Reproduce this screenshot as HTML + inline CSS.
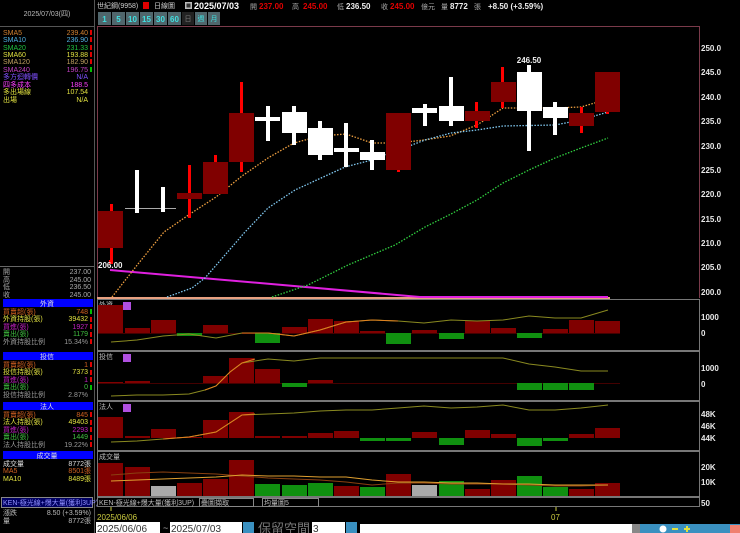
<!DOCTYPE html>
<html><head><meta charset="utf-8"><style>
html,body{margin:0;padding:0;background:#000;width:740px;height:533px;overflow:hidden}
svg{display:block}
text{font-family:"Liberation Sans","Noto Sans CJK TC",sans-serif}
.s{font-size:7px}
.ax{font-size:8px;font-weight:bold;fill:#e8e8e8}
</style></head><body>
<svg width="740" height="533" viewBox="0 0 740 533" xmlns="http://www.w3.org/2000/svg">
<rect width="740" height="533" fill="#000"/>
<line x1="94.5" y1="0" x2="94.5" y2="533" stroke="#555" stroke-width="1"/>
<line x1="0" y1="26.5" x2="94" y2="26.5" stroke="#555"/>
<text x="47" y="16" class="s" fill="#bbb" text-anchor="middle">2025/07/03(四)</text>
<g class="s">
<text x="3" y="35" fill="#d08030">SMA5</text><text x="88" y="35" fill="#d08030" text-anchor="end">239.40</text>
<text x="3" y="42" fill="#50b0e0">SMA10</text><text x="88" y="42" fill="#50b0e0" text-anchor="end">236.90</text>
<text x="3" y="50" fill="#20c040">SMA20</text><text x="88" y="50" fill="#20c040" text-anchor="end">231.33</text>
<text x="3" y="57" fill="#e0e040">SMA60</text><text x="88" y="57" fill="#e0e040" text-anchor="end">193.88</text>
<text x="3" y="64" fill="#c0a060">SMA120</text><text x="88" y="64" fill="#c0a060" text-anchor="end">182.90</text>
<text x="3" y="72" fill="#c040c0">SMA240</text><text x="88" y="72" fill="#c040c0" text-anchor="end">196.75</text>
<text x="3" y="79" fill="#8050ff">多方迴轉價</text><text x="88" y="79" fill="#8050ff" text-anchor="end">N/A</text>
<text x="3" y="87" fill="#ff40ff">四多成本</text><text x="88" y="87" fill="#ff40ff" text-anchor="end">188.5</text>
<text x="3" y="94" fill="#e0e040">多出場線</text><text x="88" y="94" fill="#e0e040" text-anchor="end">107.54</text>
<text x="3" y="102" fill="#e0e040">出場</text><text x="88" y="102" fill="#e0e040" text-anchor="end">N/A</text>
</g>
<g fill="#e00000"><rect x="90" y="30" width="2" height="5"/><rect x="90" y="37" width="2" height="5"/><rect x="90" y="45" width="2" height="5"/><rect x="90" y="52" width="2" height="5"/><rect x="90" y="59" width="2" height="5"/></g>
<rect x="90" y="67" width="2" height="5" fill="#00c000"/>
<line x1="0" y1="266.5" x2="94" y2="266.5" stroke="#666"/>
<g class="s" fill="#aaa">
<text x="3" y="274">開</text><text x="91" y="274" text-anchor="end">237.00</text>
<text x="3" y="282">高</text><text x="91" y="282" text-anchor="end">245.00</text>
<text x="3" y="289">低</text><text x="91" y="289" text-anchor="end">236.50</text>
<text x="3" y="297">收</text><text x="91" y="297" text-anchor="end">245.00</text>
</g>
<rect x="3" y="299" width="90" height="8" fill="#0000ff"/>
<text x="47" y="306" class="s" fill="#ddd" text-anchor="middle">外資</text>
<g class="s">
<text x="3" y="314" fill="#d06020">買賣超(張)</text><text x="88" y="314" fill="#d06020" text-anchor="end">748</text>
<text x="3" y="321" fill="#e0e040">外資持股(張)</text><text x="88" y="321" fill="#e0e040" text-anchor="end">39432</text>
<text x="3" y="329" fill="#c020c0">買進(張)</text><text x="88" y="329" fill="#c020c0" text-anchor="end">1927</text>
<text x="3" y="336" fill="#40c040">賣出(張)</text><text x="88" y="336" fill="#40c040" text-anchor="end">1179</text>
<text x="3" y="344" fill="#999">外資持股比例</text><text x="88" y="344" fill="#999" text-anchor="end">15.34%</text>
</g>
<rect x="3" y="352" width="90" height="8" fill="#0000ff"/>
<text x="47" y="359" class="s" fill="#ddd" text-anchor="middle">投信</text>
<g class="s">
<text x="3" y="367" fill="#d06020">買賣超(張)</text><text x="88" y="367" fill="#d06020" text-anchor="end">1</text>
<text x="3" y="374" fill="#e0e040">投信持股(張)</text><text x="88" y="374" fill="#e0e040" text-anchor="end">7373</text>
<text x="3" y="382" fill="#c020c0">買進(張)</text><text x="88" y="382" fill="#c020c0" text-anchor="end">1</text>
<text x="3" y="389" fill="#40c040">賣出(張)</text><text x="88" y="389" fill="#40c040" text-anchor="end">0</text>
<text x="3" y="397" fill="#999">投信持股比例</text><text x="88" y="397" fill="#999" text-anchor="end">2.87%</text>
</g>
<rect x="3" y="402" width="90" height="8" fill="#0000ff"/>
<text x="47" y="409" class="s" fill="#ddd" text-anchor="middle">法人</text>
<g class="s">
<text x="3" y="417" fill="#d06020">買賣超(張)</text><text x="88" y="417" fill="#d06020" text-anchor="end">845</text>
<text x="3" y="424" fill="#e0e040">法人持股(張)</text><text x="88" y="424" fill="#e0e040" text-anchor="end">49403</text>
<text x="3" y="432" fill="#c020c0">買進(張)</text><text x="88" y="432" fill="#c020c0" text-anchor="end">2293</text>
<text x="3" y="439" fill="#40c040">賣出(張)</text><text x="88" y="439" fill="#40c040" text-anchor="end">1449</text>
<text x="3" y="447" fill="#999">法人持股比例</text><text x="88" y="447" fill="#999" text-anchor="end">19.22%</text>
</g>
<rect x="3" y="451" width="90" height="8" fill="#0000ff"/>
<text x="47" y="458" class="s" fill="#ddd" text-anchor="middle">成交量</text>
<g class="s">
<text x="3" y="466" fill="#ddd">成交量</text><text x="91" y="466" fill="#ddd" text-anchor="end">8772張</text>
<text x="3" y="473" fill="#d06020">MA5</text><text x="91" y="473" fill="#d06020" text-anchor="end">8501張</text>
<text x="3" y="481" fill="#e0e040">MA10</text><text x="91" y="481" fill="#e0e040" text-anchor="end">8489張</text>
</g>
<g fill="#e00000"><rect x="90" y="309" width="2" height="5"/><rect x="90" y="317" width="2" height="5"/><rect x="90" y="324" width="2" height="5"/><rect x="90" y="332" width="2" height="5"/><rect x="90" y="339" width="2" height="5"/>
<rect x="90" y="362" width="2" height="5"/><rect x="90" y="370" width="2" height="5"/><rect x="90" y="377" width="2" height="5"/>
<rect x="90" y="412" width="2" height="5"/><rect x="90" y="420" width="2" height="5"/><rect x="90" y="427" width="2" height="5"/><rect x="90" y="435" width="2" height="5"/><rect x="90" y="442" width="2" height="5"/></g>
<rect x="90" y="309" width="2" height="5" fill="#00c000"/><rect x="90" y="385" width="2" height="5" fill="#00c000"/>
<rect x="1.5" y="497.5" width="91" height="10" fill="#000060" stroke="#888"/>
<text x="3" y="505" class="s" fill="#9090ff">KEN-極光線+爆大量(獲利3UP)</text>
<g class="s" fill="#bbb">
<text x="3" y="515">漲跌</text><text x="91" y="515" text-anchor="end">8.50 (+3.59%)</text>
<text x="3" y="523">量</text><text x="91" y="523" text-anchor="end">8772張</text>
</g>

<text x="97" y="8" class="s" fill="#ccc">世紀鋼(9958)</text>
<rect x="143" y="2" width="6" height="7" fill="#e00000"/>
<text x="154" y="8" class="s" fill="#ccc">日線圖</text>
<rect x="185" y="2" width="7" height="7" fill="#bbb"/><rect x="186.5" y="3.5" width="4" height="4" fill="#333"/>
<text x="194" y="9" font-size="9" font-weight="bold" fill="#fff">2025/07/03</text>
<g font-size="8" font-weight="bold">
<text x="250" y="9" class="s" fill="#aaa" font-weight="normal">開</text><text x="259" y="9" fill="#e00000">237.00</text>
<text x="292" y="9" class="s" fill="#aaa" font-weight="normal">高</text><text x="303" y="9" fill="#e00000">245.00</text>
<text x="337" y="9" class="s" fill="#aaa" font-weight="normal">低</text><text x="346" y="9" fill="#eee">236.50</text>
<text x="381" y="9" class="s" fill="#aaa" font-weight="normal">收</text><text x="390" y="9" fill="#e00000">245.00</text>
<text x="421" y="9" class="s" fill="#aaa" font-weight="normal">億元</text>
<text x="441" y="9" class="s" fill="#aaa" font-weight="normal">量</text><text x="450" y="9" fill="#eee">8772</text>
<text x="474" y="9" class="s" fill="#aaa" font-weight="normal">張</text>
<text x="488" y="9" fill="#eee">+8.50 (+3.59%)</text>
</g>
<g font-size="8" font-weight="bold" fill="#40e0e0" text-anchor="middle">
<rect x="98" y="12" width="13" height="13" fill="#50666c"/><text x="104.5" y="22">1</text>
<rect x="112" y="12" width="13" height="13" fill="#50666c"/><text x="118.5" y="22">5</text>
<rect x="126" y="12" width="13" height="13" fill="#50666c"/><text x="132.5" y="22">10</text>
<rect x="140" y="12" width="13" height="13" fill="#50666c"/><text x="146.5" y="22">15</text>
<rect x="154" y="12" width="13" height="13" fill="#50666c"/><text x="160.5" y="22">30</text>
<rect x="168" y="12" width="13" height="13" fill="#50666c"/><text x="174.5" y="22">60</text>
<rect x="182" y="12" width="12" height="13" fill="#222"/><text x="188" y="21" class="s" fill="#777" font-weight="normal">日</text>
<rect x="195" y="12" width="12" height="13" fill="#50666c"/><text x="201" y="21" class="s" font-weight="normal">週</text>
<rect x="208" y="12" width="12" height="13" fill="#50666c"/><text x="214" y="21" class="s" font-weight="normal">月</text>
</g>

<g fill="none" stroke="#7a3a4a" stroke-width="1">
<line x1="97" y1="26.5" x2="699.5" y2="26.5"/>
<line x1="699.5" y1="26" x2="699.5" y2="298"/>
<line x1="97.5" y1="26" x2="97.5" y2="298"/>
</g>
<g fill="none" stroke="#777" stroke-width="1">
<rect x="97.5" y="299.5" width="602" height="51"/>
<rect x="97.5" y="351.5" width="602" height="49"/>
<rect x="97.5" y="401.5" width="602" height="49"/>
<rect x="97.5" y="451.5" width="602" height="45"/>
<rect x="97.5" y="497.5" width="602" height="9"/>
</g>
<line x1="97" y1="298" x2="610" y2="298" stroke="#e8a080" stroke-width="2"/>

<g class="ax">
<text x="701" y="51">250.0</text><text x="701" y="75">245.0</text><text x="701" y="100">240.0</text>
<text x="701" y="124">235.0</text><text x="701" y="149">230.0</text><text x="701" y="173">225.0</text>
<text x="701" y="197">220.0</text><text x="701" y="222">215.0</text><text x="701" y="246">210.0</text>
<text x="701" y="270">205.0</text><text x="701" y="295">200.0</text>
<text x="701" y="320">1000</text><text x="701" y="336">0</text>
<text x="701" y="371">1000</text><text x="701" y="387">0</text>
<text x="701" y="417">48K</text><text x="701" y="429">46K</text><text x="701" y="441">44K</text>
<text x="701" y="470">20K</text><text x="701" y="485">10K</text><text x="701" y="506">50</text>
</g>

<polyline points="110,270 420,297 608,297" fill="none" stroke="#e020e0" stroke-width="2"/>
<polyline points="112,297 138,264 164,232 190,214 216,197 242,176 268,158 294,143 320,136 346,134 372,143 398,143 424,140 450,136 477,125 503,108 529,108 555,108 581,107 608,99" fill="none" stroke="#f0a040" stroke-width="1.3" stroke-dasharray="1.5,1.5"/>
<polyline points="167,297 192,288 205,278 245,232 268,208 295,190 345,167 372,160 425,140 451,133 477,130 503,126 555,125 581,120 608,112" fill="none" stroke="#80c8f0" stroke-width="1.3" stroke-dasharray="1.5,1.5"/>
<polyline points="272,297 308,285 348,265 395,245 425,227 451,214 477,200 503,183 529,170 555,158 581,148 608,138" fill="none" stroke="#30d040" stroke-width="1.3" stroke-dasharray="1.5,1.5"/>

<g fill="#ff0000">
<rect x="110" y="204" width="3" height="58"/><rect x="188" y="165" width="3" height="53"/>
<rect x="214" y="155" width="3" height="39"/><rect x="240" y="82" width="3" height="90"/>
<rect x="397" y="113" width="3" height="59"/><rect x="475" y="102" width="3" height="26"/>
<rect x="501" y="67" width="3" height="41"/><rect x="580" y="107" width="3" height="26"/>
<rect x="606" y="72" width="3" height="42"/>
<rect x="109" y="260" width="4" height="4"/>
</g>
<g fill="#800000">
<rect x="98" y="211" width="25" height="37"/><rect x="177" y="193" width="25" height="6"/>
<rect x="203" y="162" width="25" height="32"/><rect x="229" y="113" width="25" height="49"/>
<rect x="386" y="113" width="25" height="57"/><rect x="465" y="111" width="25" height="10"/>
<rect x="491" y="82" width="25" height="20"/><rect x="569" y="113" width="25" height="13"/>
<rect x="595" y="72" width="25" height="40"/>
</g>
<line x1="125" y1="208.5" x2="176" y2="208.5" stroke="#aaa"/>
<g fill="#fff">
<rect x="135" y="170" width="4" height="43"/><rect x="161" y="187" width="4" height="25"/>
<rect x="266" y="106" width="4" height="35"/><rect x="255" y="117" width="25" height="4"/>
<rect x="292" y="106" width="4" height="39"/><rect x="282" y="112" width="25" height="21"/>
<rect x="318" y="121" width="4" height="39"/><rect x="308" y="128" width="25" height="27"/>
<rect x="344" y="123" width="4" height="44"/><rect x="334" y="148" width="25" height="4"/>
<rect x="370" y="140" width="4" height="30"/><rect x="360" y="152" width="25" height="8"/>
<rect x="423" y="104" width="4" height="22"/><rect x="412" y="108" width="25" height="5"/>
<rect x="449" y="77" width="4" height="49"/><rect x="439" y="106" width="25" height="15"/>
<rect x="527" y="65" width="4" height="86"/><rect x="517" y="72" width="25" height="39"/>
<rect x="553" y="102" width="4" height="33"/><rect x="543" y="107" width="25" height="11"/>
</g>
<text x="529" y="63" font-size="8" font-weight="bold" fill="#eee" text-anchor="middle">246.50</text>
<text x="98" y="268" font-size="8" font-weight="bold" fill="#eee">206.00</text>

<text x="99" y="307" class="s" fill="#bbb">外資</text>
<rect x="123" y="302" width="8" height="8" fill="#b050e0"/>
<line x1="98" y1="333.5" x2="620" y2="333.5" stroke="#400" />
<g fill="#800000">
<rect x="98" y="305" width="25" height="28"/><rect x="125" y="328" width="25" height="5"/>
<rect x="151" y="320" width="25" height="13"/><rect x="203" y="325" width="25" height="8"/>
<rect x="282" y="327" width="25" height="6"/><rect x="308" y="319" width="25" height="14"/>
<rect x="334" y="321" width="25" height="12"/><rect x="360" y="331" width="25" height="2"/>
<rect x="412" y="330" width="25" height="3"/><rect x="465" y="321" width="25" height="12"/>
<rect x="491" y="328" width="25" height="5"/><rect x="543" y="329" width="25" height="4"/>
<rect x="569" y="320" width="25" height="13"/><rect x="595" y="321" width="25" height="12"/>
</g>
<g fill="#109010">
<rect x="177" y="333" width="25" height="3"/><rect x="255" y="333" width="25" height="10"/>
<rect x="386" y="333" width="25" height="11"/><rect x="439" y="333" width="25" height="6"/>
<rect x="517" y="333" width="25" height="5"/>
</g>
<polyline points="111,342 137,340 163,336 189,334 216,338 242,333 268,333 294,336 320,330 346,322 372,320 398,321 424,323 451,320 477,321 503,320 529,316 555,318 581,318 608,310" fill="none" stroke="#8a8a20" stroke-width="1"/>
<polyline points="242,333 268,333 294,336 320,330 346,322 372,320 398,321" fill="none" stroke="#e08020" stroke-width="1"/>

<text x="99" y="359" class="s" fill="#bbb">投信</text>
<rect x="123" y="354" width="8" height="8" fill="#b050e0"/>
<line x1="98" y1="383.5" x2="620" y2="383.5" stroke="#400"/>
<g fill="#800000">
<rect x="98" y="382" width="25" height="1"/><rect x="125" y="381" width="25" height="2"/>
<rect x="203" y="376" width="25" height="7"/><rect x="229" y="358" width="25" height="25"/>
<rect x="255" y="369" width="25" height="14"/><rect x="308" y="380" width="25" height="3"/>
</g>
<g fill="#109010">
<rect x="282" y="383" width="25" height="4"/><rect x="517" y="383" width="25" height="7"/>
<rect x="543" y="383" width="25" height="7"/><rect x="569" y="383" width="25" height="7"/>
</g>
<polyline points="111,396 137,395 163,395 189,394 205,390 216,386 230,372 242,363 268,359 294,361 320,358 346,358 372,358 398,358 424,358 451,358 477,358 503,358 529,364 555,367 581,371 608,371" fill="none" stroke="#8a8a20" stroke-width="1"/>
<polyline points="205,390 216,386 230,372 242,363 255,359" fill="none" stroke="#e08020" stroke-width="1"/>

<text x="99" y="409" class="s" fill="#bbb">法人</text>
<rect x="123" y="404" width="8" height="8" fill="#b050e0"/>
<g fill="#800000">
<rect x="98" y="417" width="25" height="21"/><rect x="125" y="436" width="25" height="2"/>
<rect x="151" y="429" width="25" height="9"/><rect x="177" y="437" width="25" height="1"/>
<rect x="203" y="420" width="25" height="18"/><rect x="229" y="412" width="25" height="26"/>
<rect x="255" y="436" width="25" height="2"/><rect x="282" y="436" width="25" height="2"/>
<rect x="308" y="433" width="25" height="5"/><rect x="334" y="431" width="25" height="7"/>
<rect x="412" y="432" width="25" height="6"/><rect x="465" y="430" width="25" height="8"/>
<rect x="491" y="434" width="25" height="4"/><rect x="569" y="434" width="25" height="4"/>
<rect x="595" y="428" width="25" height="10"/>
</g>
<g fill="#109010">
<rect x="360" y="438" width="25" height="3"/><rect x="386" y="438" width="25" height="3"/>
<rect x="439" y="438" width="25" height="7"/><rect x="517" y="438" width="25" height="8"/>
<rect x="543" y="438" width="25" height="3"/>
</g>
<polyline points="111,442 137,441 163,439 189,437 216,432 242,415 268,414 294,413 320,411 346,410 372,410 398,408 424,406 451,408 477,407 503,405 529,410 555,410 581,408 608,405" fill="none" stroke="#8a8a20" stroke-width="1"/>
<polyline points="163,439 189,437 216,432 242,415 255,414" fill="none" stroke="#e08020" stroke-width="1"/>

<text x="99" y="459" class="s" fill="#bbb">成交量</text>
<g fill="#800000">
<rect x="98" y="463" width="25" height="33"/><rect x="125" y="467" width="25" height="29"/>
<rect x="177" y="483" width="25" height="13"/><rect x="203" y="479" width="25" height="17"/>
<rect x="229" y="460" width="25" height="36"/><rect x="334" y="486" width="25" height="10"/>
<rect x="386" y="474" width="25" height="22"/><rect x="465" y="489" width="25" height="7"/>
<rect x="491" y="480" width="25" height="16"/><rect x="569" y="489" width="25" height="7"/>
<rect x="595" y="483" width="25" height="13"/>
</g>
<g fill="#109010">
<rect x="255" y="484" width="25" height="12"/><rect x="282" y="485" width="25" height="11"/>
<rect x="308" y="483" width="25" height="13"/><rect x="360" y="487" width="25" height="9"/>
<rect x="439" y="481" width="25" height="15"/><rect x="517" y="476" width="25" height="20"/>
<rect x="543" y="487" width="25" height="9"/>
</g>
<g fill="#aaa"><rect x="151" y="486" width="25" height="10"/><rect x="412" y="485" width="25" height="11"/></g>
<polyline points="111,475 137,473 163,472 189,473 216,474 242,476 268,478 294,479 320,480 346,482 372,485 398,483 424,483 451,484 477,484 503,484 529,485 555,486 581,486 608,485" fill="none" stroke="#8a4010" stroke-width="1"/>
<polyline points="111,481 137,480 163,479 189,478 216,477 242,475 268,476 294,476 320,477 346,477 372,480 398,482 424,482 451,483 477,483 503,484 529,484 555,485 581,485 608,485" fill="none" stroke="#e0a030" stroke-width="1"/>

<text x="99" y="505" class="s" fill="#bbb">KEN-極光線+爆大量(獲利3UP)</text>
<rect x="199.5" y="498.5" width="54" height="8" fill="#000" stroke="#888"/>
<text x="201" y="505" class="s" fill="#bbb">疊圖擷取</text>
<rect x="262.5" y="498.5" width="56" height="8" fill="#000" stroke="#888"/>
<text x="264" y="505" class="s" fill="#bbb">均量圖5</text>
<line x1="111" y1="507" x2="111" y2="511" stroke="#cccc40"/>
<line x1="556" y1="507" x2="556" y2="511" stroke="#cccc40"/>
<text x="97" y="520" font-size="8" fill="#cccc40">2025/06/06</text>
<text x="551" y="520" font-size="8" fill="#cccc40">07</text>
<rect x="96" y="522" width="64" height="11" fill="#fff"/>
<text x="97" y="532" font-size="10" fill="#333">2025/06/06</text>
<text x="163" y="531" font-size="9" fill="#aaa">~</text>
<rect x="170" y="522" width="72" height="11" fill="#fff"/>
<text x="171" y="532" font-size="10" fill="#333">2025/07/03</text>
<rect x="243" y="522" width="11" height="11" fill="#3a90c0"/>
<text x="258" y="533" font-size="13" fill="#777">保留空間</text>
<rect x="312" y="522" width="33" height="11" fill="#fff"/>
<text x="313" y="532" font-size="10" fill="#333">3</text>
<rect x="346" y="522" width="11" height="11" fill="#3a90c0"/>
<rect x="360" y="524" width="272" height="9" fill="#fff"/>
<rect x="632" y="524" width="8" height="9" fill="#888"/>
<rect x="640" y="524" width="100" height="9" fill="#3a90c0"/>
<circle cx="663" cy="529" r="3.5" fill="#fff"/>
<rect x="672" y="528" width="6" height="2" fill="#e0e040"/>
<rect x="684" y="528" width="6" height="2" fill="#e0e040"/><rect x="686" y="526" width="2" height="6" fill="#e0e040"/>
<rect x="730" y="525" width="10" height="8" fill="#f08070"/>
</svg>
</body></html>
